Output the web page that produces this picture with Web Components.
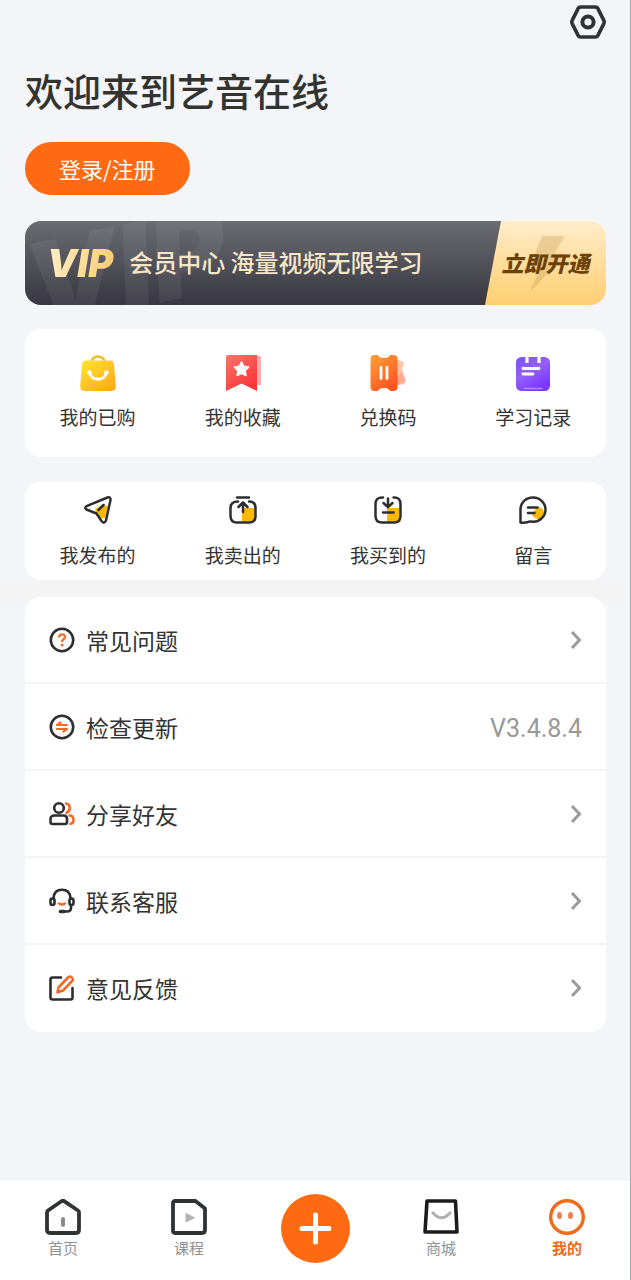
<!DOCTYPE html>
<html lang="zh-CN">
<head>
<meta charset="utf-8">
<meta name="viewport" content="width=device-width, initial-scale=1">
<title>我的</title>
<style>
  body {
    margin: 0;
    font-family: "Noto Sans CJK SC", "Noto Sans", sans-serif;
    color: #333;
    background: #f3f5f9;
  }
</style>
</head>
<body>
<profile-page></profile-page>

<script>
const ICONS = {
  gear: ['0 0 36 34', `<g fill="none" stroke="#2f3336" stroke-width="3.6" stroke-linejoin="round"><path d="M10.500 2h15q1.500 0 2.300 1.400l6 12q.8 1.600 0 3.200l-6 12q-.8 1.400-2.300 1.400h-15q-1.500 0-2.300-1.400l-6-12q-.8-1.600 0-3.200l6-12Q9 2 10.500 2z"/><circle cx="18" cy="17" r="5.600" stroke-width="4"/></g>`],
  bag: ['0 0 36 36', `<defs><linearGradient id="g" x1="0" y1="0" x2="1" y2="1"><stop offset="0" stop-color="#ffe52e"/><stop offset="1" stop-color="#ffa51c"/></linearGradient></defs><path d="M11 7.500C12 3.500 15 1.500 18 1.500s6 2 7 6" fill="none" stroke="#f0bd25" stroke-width="2.400"/><path d="M6 5.500h24q3.500 0 4 4L35.800 31q.2 5-4.800 5H5q-5 0-4.800-5L2 9.500q.5-4 4-4z" fill="url(#g)"/><path d="M9.500 17.500c2 9 15 9 17 0" fill="none" stroke="#fff" stroke-width="3" stroke-linecap="round"/><circle cx="9.500" cy="17.500" r="2.200" fill="#fff"/><circle cx="26.500" cy="17.500" r="2.200" fill="#fff"/>`],
  bookmark: ['0 0 36 36', `<defs><linearGradient id="g" x1="0" y1="0" x2=".7" y2="1"><stop offset="0" stop-color="#f87569"/><stop offset="1" stop-color="#fa3538"/></linearGradient></defs><path d="M29 1h5q2 0 2 2v27h-5z" fill="#fbaab0"/><path d="M3 0h29v36L16.500 28.500 1 36V2q0-2 2-2z" fill="url(#g)"/><path d="M16.500 7l2.200 4.400 4.900.7-3.600 3.500.9 4.900-4.400-2.300-4.400 2.300.9-4.900-3.600-3.500 4.900-.7z" fill="#fff" stroke="#fff" stroke-width="1.600" stroke-linejoin="round"/>`],
  ticket: ['0 0 36 36', `<defs><linearGradient id="g" x1="0" y1="0" x2=".6" y2="1"><stop offset="0" stop-color="#ffa338"/><stop offset="1" stop-color="#ff5520"/></linearGradient></defs><path d="M26 4.500l8 2.500-2 7 4 11-2 4-8 2z" fill="#ffc5ab"/><path d="M27 21l4.500-4 3.500 10-8 3z" fill="#ffa98e"/><path d="M4.500 0H8q1 3 6 3t6-3h3.500q4 0 4 4v28q0 4-4 4H20q-1-3-6-3t-6 3H4.500q-4 0-4-4V4q0-4 4-4z" fill="url(#g)"/><path d="M11 12.500v11M17 12.500v11" stroke="#fff" stroke-width="2.800" stroke-linecap="round"/>`],
  notes: ['0 0 36 36', `<defs><linearGradient id="g" x1="0" y1="0" x2=".6" y2="1"><stop offset="0" stop-color="#7853f0"/><stop offset=".5" stop-color="#9460fa"/><stop offset="1" stop-color="#7a35ff"/></linearGradient></defs><rect x="1" y="2" width="34" height="34" rx="5.500" fill="url(#g)"/><path d="M12 0v8M24 0v8" stroke="#fff" stroke-width="3.200"/><path d="M8 13.500h16M8 19h10" stroke="#fff" stroke-width="2.800" stroke-linecap="round"/><path d="M9 33.500h18" stroke="#b487ff" stroke-width="1.500" stroke-linecap="round"/>`],
  send: ['0 0 28 28', `<path d="M11 13l8-4.500 5 2L21 22h-5l-3.500-4z" fill="#ffb800"/><g fill="none" stroke="#2d2e30" stroke-width="2.500" stroke-linejoin="round" stroke-linecap="round"><path d="M2.500 10.200L23.500 1.500q3.300-1 3 2.500L22 24.500q-1.800 4-4.500.5L12.500 17.500 2.500 13.500q-2.500-1.700 0-3.300z"/><path d="M14.500 14l5-5"/></g>`],
  sold: ['0 0 28 28', `<path d="M13 12h13v14H13z" fill="#ffb800"/><g fill="none" stroke="#2d2e30" stroke-width="2.500" stroke-linecap="round" stroke-linejoin="round"><path d="M8 1.500h12M9 5.500C4 5.500 1.500 7.500 1.500 12v8q0 6.500 6.500 6.500h12q6.500 0 6.500-6.500v-8q0-6.500-6.500-6.500"/><path d="M14 16V6.700M9.500 11L14 6.500 18.500 11"/></g>`],
  bought: ['0 0 28 28', `<path d="M13 12h13.500v14H13z" fill="#ffb800"/><g fill="none" stroke="#2d2e30" stroke-width="2.500" stroke-linecap="round" stroke-linejoin="round"><path d="M9 1.500Q1.500 1 1.500 8v12q0 6.500 6.500 6.500h12q6.500 0 6.500-6.500V8q0-7-7-6.500"/><path d="M14 2.500v8.500M9.500 7l4.500 4.200L18.500 7M9 16.500h10.500"/></g>`],
  message: ['0 0 28 28', `<path d="M18 11a6 6 0 1 1-5 7z" fill="#ffb800"/><g fill="none" stroke="#2d2e30" stroke-width="2.500" stroke-linecap="round" stroke-linejoin="round"><path d="M1.500 26.500V13.500C1.500 6.500 7 1.500 14 1.500s12.500 5.400 12.500 12S21 26 14 25.700q-4-.4-6 .6-3 .8-6.500.2z"/><path d="M9 11.500h9.500M9 17h6.500"/></g>`],
  help: ['0 0 26 26', `<circle cx="13" cy="13" r="11.200" fill="none" stroke="#2d2e30" stroke-width="2.600"/><path d="M10 10.500c0-4.300 6-4 6-.6 0 2.200-3 2.300-3 5" fill="none" stroke="#f26a26" stroke-width="2.300"/><circle cx="13" cy="18" r="1.500" fill="#f26a26"/>`],
  update: ['0 0 26 26', `<circle cx="13" cy="13" r="11.200" fill="none" stroke="#2d2e30" stroke-width="2.600"/><path d="M18 11H8l3.500-2.500M8 15h10l-3.500 2.500" fill="none" stroke="#f26a26" stroke-width="2.200" stroke-linejoin="round" stroke-linecap="round"/>`],
  friends: ['0 0 26 26', `<g fill="none" stroke-width="2.600" stroke-linecap="round" stroke-linejoin="round"><circle cx="10" cy="7" r="4.800" stroke="#2d2e30"/><path d="M5.500 14.500h9q3.500 0 3.500 3.500v3q0 2-2 2H3.500q-2 0-2-2v-3q0-3.500 4-3.500z" stroke="#2d2e30"/><path d="M17 2.500c5 .8 5 7.600.5 9.200M20.500 14.500q4 0 4 4.500 0 3.500-3 3.800" stroke="#f26a26"/></g>`],
  service: ['0 0 26 26', `<g fill="none" stroke-width="2.600" stroke-linecap="round"><path d="M4.500 10C5 4.500 8.500 1.800 13 1.800S21 4.500 21.500 10M22 17v3q0 3.500-4 3.500h-6" stroke="#2d2e30"/><rect x="1.500" y="10.500" width="4" height="6.500" rx="2" stroke="#2d2e30"/><rect x="20.500" y="10.500" width="4" height="6.500" rx="2" stroke="#2d2e30"/><path d="M10 15.500q3 2 6 0" stroke="#f26a26"/><path d="M11.500 23.500h3.500" stroke="#2d2e30" stroke-width="3.600"/></g>`],
  feedback: ['0 0 26 26', `<g fill="none" stroke-width="2.600" stroke-linecap="round" stroke-linejoin="round"><path d="M12 2.500H3.500q-2 0-2 2v18q0 2 2 2h18q2 0 2-2V13" stroke="#2d2e30"/><path d="M9.500 12.500L19.500 2q1.500-1 3 .2t1.500 3L14 15.500l-5.500 1.800z" stroke="#f26a26"/></g>`],
  chevron: ['0 0 12 20', `<path d="M2 2l7.500 8L2 18" fill="none" stroke="#9b9b9b" stroke-width="3"/>`],
  home: ['0 0 36 36', `<path d="M2 13.500q0-1.300 1-2L16.500 2.300q1.500-1 3 0L33 11.500q1 .7 1 2V31q0 3-3 3H5q-3 0-3-3z" fill="none" stroke="#2f3336" stroke-width="3.800"/><rect x="16" y="18" width="4" height="10" rx="2" fill="#8b8b8b"/>`],
  course: ['0 0 36 36', `<path d="M4 2h20.500L34 9.500V31q0 3-3 3H4q-2 0-2-2V4q0-2 2-2z" fill="none" stroke="#2f3336" stroke-width="3.800" stroke-linejoin="round"/><path d="M15 14.500v8.500l8.500-4.200z" fill="#b3b3b3" stroke="#b3b3b3"/>`],
  plus: ['0 0 69 69', `<circle cx="34.500" cy="34.500" r="34.500" fill="#ff6a13"/><path d="M34.500 21v27M21 34.500h27" stroke="#fff" stroke-width="5" stroke-linecap="round"/>`],
  shop: ['0 0 36 36', `<path d="M4 2h28.500L34 33H2z" fill="none" stroke="#1f1b1c" stroke-width="3.600" stroke-linejoin="round"/><path d="M10 14q8.500 9.500 17 0" fill="none" stroke="#b0b0b0" stroke-width="3.200" stroke-linecap="round"/>`],
  face: ['0 0 36 36', `<circle cx="18" cy="18" r="16.300" fill="#fff" stroke="#f26a1b" stroke-width="3.400"/><ellipse cx="10.500" cy="16.500" rx="2.500" ry="3.500" fill="#f0805a"/><ellipse cx="21.500" cy="16.500" rx="2.500" ry="3.500" fill="#f0805a"/>`]
};

function define(name, render) {
  customElements.define(name, class extends HTMLElement {
    connectedCallback() {
      if (this.shadowRoot) return;
      this.attachShadow({ mode: 'open' }).innerHTML = render(this);
    }
  });
}

/* One drawing from the icon set; its host sets the size. */
define('ui-icon', el => {
  const [box, art] = ICONS[el.getAttribute('name')];
  return `<style>:host{display:block;flex:none}svg{display:block;width:100%;height:100%}</style>
    <svg viewBox="${box}" aria-hidden="true">${art}</svg>`;
});

define('welcome-header', () => `
  <style>
    :host { display: block; padding: 5px 0 26px; }
    .top { display: flex; justify-content: flex-end; }
    button { border: 0; padding: 0; background: none; font: inherit; cursor: pointer; }
    ui-icon { width: 36px; height: 34px; }
    h1 { margin: 23px 0 24px; font-size: 38px; line-height: 56px; font-weight: 500; color: #33332f; }
    .login { padding: 0 34px; height: 53px; border-radius: 27px; background: #ff6a13; color: #fff; font-size: 22px; line-height: 53px; display: block; }
  </style>
  <div class="top"><button aria-label="设置"><ui-icon name="gear"></ui-icon></button></div>
  <h1><slot></slot></h1>
  <button class="login">登录/注册</button>`);

define('vip-banner', () => `
  <style>
    :host { display: flex; position: relative; height: 84px; border-radius: 16px; overflow: hidden; background: linear-gradient(#6b6c71, #383742) no-repeat; background-size: calc(100% - 60px) 100%; }
    a { flex: 1; display: flex; align-items: center; padding-left: 22px; gap: 12px; text-decoration: none; position: relative; }
    .logo { padding-right: 4px; font: italic 900 38px/40px Inter, sans-serif; color: transparent; background: linear-gradient(100deg, #fff0c8, #fbc96e); background-clip: text; -webkit-background-clip: text; }
    .mark { position: absolute; left: 0; top: -12px; font: italic 900 116px/116px Inter, sans-serif; color: #fff; opacity: .06; transform: rotate(-12deg); }
    .text { font-size: 24px; line-height: 36px; padding-bottom: 2px; font-weight: 500; color: #f7e6c8; white-space: nowrap; }
    button { position: relative; width: 121px; border: 0; padding: 0 0 2px; background: linear-gradient(#ffedca, #ffce71); clip-path: polygon(16px 0, 100% 0, 100% 100%, 0 100%); font: italic 900 22px/32px "Noto Sans CJK SC", sans-serif; color: #6a4207; }
    svg { position: absolute; inset: 0; width: 121px; height: 84px; }
    button span { position: relative; }
  </style>
  <span class="mark" aria-hidden="true">VIP</span>
  <a href="#vip"><span class="logo">VIP</span><span class="text">会员中心 海量视频无限学习</span></a>
  <button><svg viewBox="0 0 121 84" aria-hidden="true"><path d="M57 15h23L69 33h12L47 69l-1-2 11-22H45z" fill="#a8772c" opacity=".22"/></svg><span>立即开通</span></button>`);

define('quick-card', () => `
  <style>
    :host { display: grid; grid-template-columns: repeat(4, 1fr); background: #fff; border-radius: 16px; padding: 26px 0; --icon: 36px; --gap: 12px; }
    :host([compact]) { padding: 14px 0 11px; --icon: 28px; --gap: 17px; }
  </style><slot></slot>`);

define('quick-link', el => `
  <style>
    :host { display: block; }
    a { display: flex; flex-direction: column; align-items: center; gap: var(--gap); font-size: 19px; line-height: 28px; color: #333; text-decoration: none; white-space: nowrap; }
    ui-icon { width: var(--icon); height: var(--icon); }
  </style>
  <a href="#${el.getAttribute('icon')}"><ui-icon name="${el.getAttribute('icon')}"></ui-icon><span><slot></slot></span></a>`);

define('menu-list', () => `
  <style>:host { display: block; background: #fff; border-radius: 16px; overflow: hidden; }</style><slot></slot>`);

define('menu-row', el => `
  <style>
    :host { display: block; border-bottom: 2px solid #f3f4f6; }
    :host(:last-child) { border-bottom-color: transparent; }
    a { display: flex; align-items: center; gap: 11px; height: 85px; padding: 0 24px; font-size: 23px; line-height: 34px; color: #333; text-decoration: none; }
    .lead { width: 26px; height: 26px; }
    .label { flex: 1; }
    .value { padding-top: 4px; font: 25px/34px Roboto, sans-serif; color: #999; }
    .end { width: 12px; height: 20px; padding-top: 1px; }
  </style>
  <a href="#${el.getAttribute('icon')}">
    <ui-icon class="lead" name="${el.getAttribute('icon')}"></ui-icon>
    <span class="label"><slot></slot></span>
    ${el.hasAttribute('value') ? `<span class="value">${el.getAttribute('value')}</span>` : '<ui-icon class="end" name="chevron"></ui-icon>'}
  </a>`);

define('tab-link', el => `
  <style>
    :host { display: flex; flex: 1; justify-content: center; }
    a { display: flex; flex-direction: column; align-items: center; gap: 2px; padding-top: 5px; font-size: 15px; line-height: 22px; color: #919191; text-decoration: none; }
    :host([current]) a { color: #f0691e; font-weight: 700; }
    ui-icon { width: 36px; height: 36px; }
  </style>
  <a href="#${el.getAttribute('icon')}"><ui-icon name="${el.getAttribute('icon')}"></ui-icon><span><slot></slot></span></a>`);

define('tab-bar', () => `
  <style>
    :host { display: block; position: sticky; bottom: 0; background: #fff; }
    nav { display: flex; padding: 13px 0 17px; }
    .add { flex: 1; display: flex; justify-content: center; }
    button { border: 0; padding: 0; background: none; }
    .add ui-icon { width: 69px; height: 69px; }
  </style>
  <nav>
    <tab-link icon="home">首页</tab-link>
    <tab-link icon="course">课程</tab-link>
    <div class="add"><button aria-label="发布"><ui-icon name="plus"></ui-icon></button></div>
    <tab-link icon="shop">商城</tab-link>
    <tab-link icon="face" current>我的</tab-link>
  </nav>`);

define('profile-page', () => `
  <style>
    :host { display: flex; flex-direction: column; box-sizing: border-box; min-height: 100vh; border-right: 1px solid #a3a4ab; }
    main { flex: 1; }
    section { padding: 0 24px 0 25px; }
    .cards { display: grid; gap: 24px; }
    .cards quick-card[compact] { margin-top: 1px; }
    .menu { padding-top: 17px; background: linear-gradient(#f4f4f4 17px, transparent 32px); }
  </style>
  <main>
    <section>
      <welcome-header>欢迎来到艺音在线</welcome-header>
    </section>
    <section class="cards">
      <vip-banner></vip-banner>
      <quick-card>
        <quick-link icon="bag">我的已购</quick-link>
        <quick-link icon="bookmark">我的收藏</quick-link>
        <quick-link icon="ticket">兑换码</quick-link>
        <quick-link icon="notes">学习记录</quick-link>
      </quick-card>
      <quick-card compact>
        <quick-link icon="send">我发布的</quick-link>
        <quick-link icon="sold">我卖出的</quick-link>
        <quick-link icon="bought">我买到的</quick-link>
        <quick-link icon="message">留言</quick-link>
      </quick-card>
    </section>
    <section class="menu">
      <menu-list>
        <menu-row icon="help">常见问题</menu-row>
        <menu-row icon="update" value="V3.4.8.4">检查更新</menu-row>
        <menu-row icon="friends">分享好友</menu-row>
        <menu-row icon="service">联系客服</menu-row>
        <menu-row icon="feedback">意见反馈</menu-row>
      </menu-list>
    </section>
  </main>
  <tab-bar></tab-bar>`);
</script>
</body>
</html>
